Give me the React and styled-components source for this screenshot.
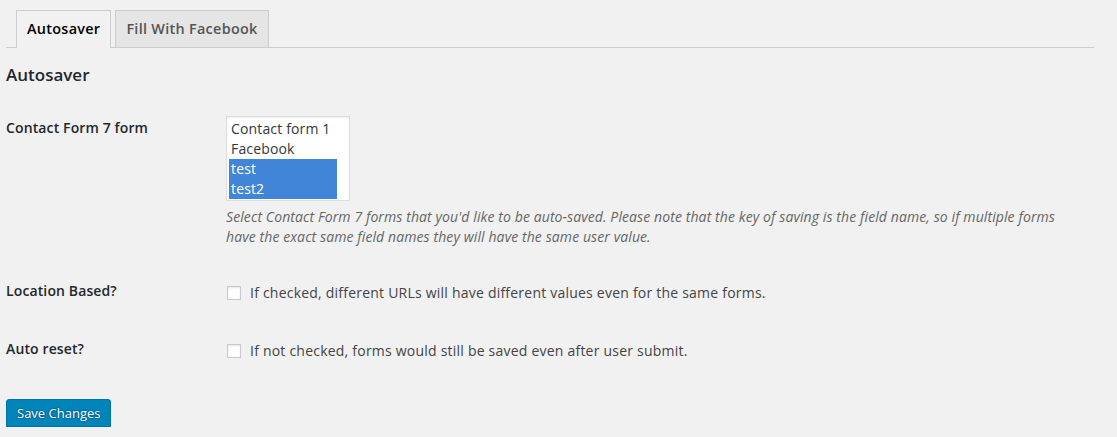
import React from "react";
import styled, { createGlobalStyle } from "styled-components";

const GlobalStyle = createGlobalStyle`
  html, body {
    margin: 0;
    padding: 0;
    background: #f1f1f1;
  }
  body {
    font-family: "Open Sans", "Liberation Sans", sans-serif;
    font-size: 13px;
    line-height: 1.4em;
    color: #444;
  }
`;

const forms = [
  { name: "Contact form 1", selected: false },
  { name: "Facebook", selected: false },
  { name: "test", selected: true },
  { name: "test2", selected: true },
];

const App = () => {
  return (
    <>
      <GlobalStyle />
      <Wrap>
        <TabBar>
          <Tab active>Autosaver</Tab>
          <Tab>Fill With Facebook</Tab>
        </TabBar>

        <SectionTitle>Autosaver</SectionTitle>

        <FormTable>
          <tbody>
            <tr>
              <Th>Contact Form 7 form</Th>
              <Td>
                <ListBox>
                  {forms.map((f) => (
                    <Option key={f.name} selected={f.selected}>
                      {f.name}
                    </Option>
                  ))}
                </ListBox>
                <Description>
                  Select Contact Form 7 forms that you'd like to be auto-saved.
                  Please note that the key of saving is the field name, so if
                  multiple forms have the exact same field names they will have
                  the same user value.
                </Description>
              </Td>
            </tr>
            <tr>
              <Th>Location Based?</Th>
              <Td>
                <CheckLabel>
                  <CheckBox />
                  If checked, different URLs will have different values even for
                  the same forms.
                </CheckLabel>
              </Td>
            </tr>
            <tr>
              <Th>Auto reset?</Th>
              <Td>
                <CheckLabel>
                  <CheckBox />
                  If not checked, forms would still be saved even after user
                  submit.
                </CheckLabel>
              </Td>
            </tr>
          </tbody>
        </FormTable>

        <Submit>
          <PrimaryButton type="button">Save Changes</PrimaryButton>
        </Submit>
      </Wrap>
    </>
  );
};

export default App;

const Wrap = styled.div`
  padding: 10px 23px 0 6px;
`;

const TabBar = styled.div`
  display: flex;
  align-items: flex-end;
  gap: 4px;
  padding-left: 10px;
  border-bottom: 1px solid #ccc;
`;

const Tab = styled.div`
  border: 1px solid #ccc;
  border-bottom: none;
  margin-bottom: ${(p) => (p.active ? "-1px" : "0")};
  padding: 6px 10px ${(p) => (p.active ? "7px" : "6px")};
  font-size: 14.4px;
  line-height: 24px;
  font-weight: 600;
  letter-spacing: 0.3px;
  background: ${(p) => (p.active ? "#f1f1f1" : "#e5e5e5")};
  color: ${(p) => (p.active ? "#000" : "#555")};
`;

const SectionTitle = styled.h3`
  margin: 16px 0 0;
  font-size: 17px;
  line-height: 22px;
  font-weight: 600;
  color: #23282d;
`;

const FormTable = styled.table`
  border-collapse: collapse;
  width: 100%;
  margin-top: 13px;
`;

const Th = styled.th`
  width: 200px;
  padding: 20px 10px 20px 0;
  vertical-align: top;
  text-align: left;
  font-size: 14px;
  line-height: 1.3;
  font-weight: 600;
  letter-spacing: 0.12px;
  color: #23282d;
`;

const Td = styled.td`
  padding: 15px 10px;
  vertical-align: top;
  font-size: 14px;
  line-height: 1.3;
`;

const ListBox = styled.div`
  box-sizing: border-box;
  width: 124px;
  height: 85px;
  padding: 2px 12px 0 2px;
  border: 1px solid #ddd;
  background: #fff;
  box-shadow: inset 0 1px 2px rgba(0, 0, 0, 0.07);
  margin-top: 2px;
`;

const Option = styled.div`
  height: 20px;
  line-height: 20px;
  padding-left: 2px;
  font-size: 14px;
  letter-spacing: 0.15px;
  color: ${(p) => (p.selected ? "#fff" : "#32373c")};
  background: ${(p) => (p.selected ? "#4185d8" : "transparent")};
`;

const Description = styled.p`
  margin: 6px 0 0;
  font-size: 14px;
  line-height: 20px;
  font-style: italic;
  letter-spacing: 0.1px;
  color: #666;
`;

const CheckLabel = styled.label`
  display: flex;
  align-items: center;
  gap: 9px;
  margin-top: 5px;
  font-size: 14px;
  line-height: 1.5;
  letter-spacing: 0.22px;
  color: #444;
`;

const CheckBox = styled.span`
  box-sizing: border-box;
  flex: none;
  width: 14px;
  height: 14px;
  margin-left: 1px;
  border: 1px solid #c5cad0;
  background: #fff;
  box-shadow: inset 0 1px 2px rgba(0, 0, 0, 0.1);
`;

const Submit = styled.p`
  margin: 0;
  padding: 21px 0 0;
`;

const PrimaryButton = styled.button`
  box-sizing: border-box;
  height: 28px;
  padding: 0 10px 1px;
  font-family: "Open Sans", "Liberation Sans", sans-serif;
  font-size: 13px;
  line-height: 26px;
  color: #fff;
  background: #0085ba;
  border: 1px solid #0073aa;
  border-radius: 3px;
  box-shadow: 0 1px 0 #006799;
  text-shadow: 0 -1px 1px #006799, 1px 0 1px #006799, 0 1px 1px #006799,
    -1px 0 1px #006799;
  cursor: pointer;
`;
